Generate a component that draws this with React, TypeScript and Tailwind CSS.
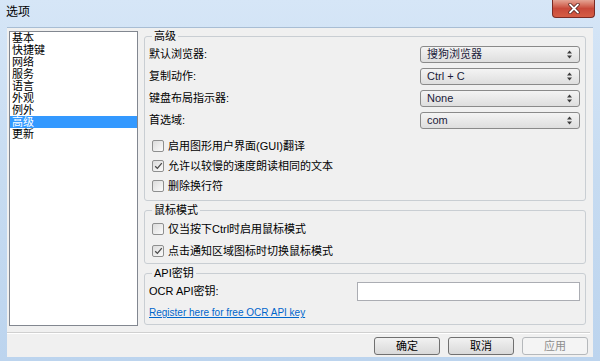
import { useState } from 'react';

const navItems = ['基本', '快捷键', '网络', '服务', '语言', '外观', '例外', '高级', '更新'];

function UpDown() {
  return (
    <svg width="7" height="9" viewBox="0 0 7 9" className="shrink-0">
      <path d="M3.5 0.5 L6 3.5 L1 3.5 Z" fill="#3c3c3c" />
      <path d="M1 5.5 L6 5.5 L3.5 8.5 Z" fill="#3c3c3c" />
    </svg>
  );
}

function Select({ value }: { value: string }) {
  return (
    <div className="w-[160px] h-[17px] pl-[6px] pr-[6px] flex items-center justify-between rounded-[3px] border border-[#8a8a8a] bg-gradient-to-b from-[#f4f4f4] to-[#dedede] text-[#1b1b3a]">
      <span className="leading-[15px]">{value}</span>
      <UpDown />
    </div>
  );
}

function CheckBox({ label, checked }: { label: string; checked?: boolean }) {
  return (
    <div className="flex items-center gap-[4px] pl-[3px]">
      <div className="w-[12px] h-[12px] rounded-[2px] border border-[#8e8f8f] bg-gradient-to-br from-[#dcdcdc] to-[#fbfbfb] flex items-center justify-center">
        {checked && (
          <svg width="9" height="8" viewBox="0 0 9 8">
            <path d="M1.2 4.2 L3.4 6.4 L7.8 1.2" fill="none" stroke="#4a4a4a" strokeWidth="1.3" />
          </svg>
        )}
      </div>
      <span className="leading-[12px]">{label}</span>
    </div>
  );
}

function Button({ label, disabled }: { label: string; disabled?: boolean }) {
  return (
    <div
      className={`w-[66px] h-[18px] flex items-center justify-center rounded-[3px] border ${
        disabled
          ? 'border-[#b5b8bb] bg-[#f4f4f4] text-[#8d8d8d]'
          : 'border-[#707070] bg-gradient-to-b from-[#f2f2f2] to-[#d9d9d9] text-black'
      }`}
    >
      {label}
    </div>
  );
}

export default function App() {
  const [selected] = useState(7);

  return (
    <div className="w-[600px] h-[361px] flex flex-col bg-gradient-to-b from-[#d6e6f7] via-[#c6dbf1] to-[#bcd4ee] font-['Liberation_Sans','Noto_Sans_CJK_SC',sans-serif] text-[11px] text-black overflow-hidden">
      {/* title bar */}
      <div className="h-[27px] flex items-start justify-between shrink-0">
        <span className="ml-[6px] mt-[5px] text-[12px] leading-[14px]">选项</span>
        <div className="mr-[5px] w-[43px] h-[18px] rounded-b-[4px] border border-t-0 border-[#7a2b24] bg-gradient-to-b from-[#e4a394] via-[#c8493a] to-[#d55d45] flex items-center justify-center">
          <svg width="12" height="11" viewBox="0 0 12 11">
            <path d="M2 1.5 L10 9.5 M10 1.5 L2 9.5" stroke="#4b1a15" strokeWidth="3.2" strokeLinecap="round" />
            <path d="M2 1.5 L10 9.5 M10 1.5 L2 9.5" stroke="#ffffff" strokeWidth="1.8" strokeLinecap="round" />
          </svg>
        </div>
      </div>

      {/* client area */}
      <div className="mx-[7px] h-[330px] bg-[#f0f0f0] border-t border-[#a8bdd4] flex flex-col">
        <div className="flex">
          {/* nav list */}
          <div className="ml-[2px] mt-[3px] w-[129px] h-[295px] border border-[#828790] bg-white">
            {navItems.map((item, i) => (
              <div
                key={item}
                className={`h-[12px] leading-[12px] pl-[2px] ${
                  i === selected ? 'bg-[#3399ff] text-white' : 'text-black'
                }`}
              >
                {item}
              </div>
            ))}
          </div>

          {/* settings */}
          <div className="ml-[6px] mt-[2px] w-[442px] flex flex-col gap-[3px]">
            <fieldset className="border border-[#c9ced3] rounded-[3px] px-[4px] pt-[1px] pb-[4px] m-0 min-w-0">
              <legend className="ml-[3px] px-[2px] h-[12px] leading-[12px]">高级</legend>
              {[
                ['默认浏览器:', '搜狗浏览器'],
                ['复制动作:', 'Ctrl + C'],
                ['键盘布局指示器:', 'None'],
                ['首选域:', 'com'],
              ].map(([label, value]) => (
                <div key={label} className="h-[22px] flex items-center justify-between pr-[1px]">
                  <span>{label}</span>
                  <Select value={value} />
                </div>
              ))}
              <div className="mt-[5px] flex flex-col">
                <div className="h-[20px] flex items-center">
                  <CheckBox label="启用图形用户界面(GUI)翻译" />
                </div>
                <div className="h-[20px] flex items-center">
                  <CheckBox label="允许以较慢的速度朗读相同的文本" checked />
                </div>
                <div className="h-[20px] flex items-center">
                  <CheckBox label="删除换行符" />
                </div>
              </div>
            </fieldset>

            <fieldset className="border border-[#c9ced3] rounded-[3px] px-[4px] pt-[2px] pb-[1px] m-0 min-w-0">
              <legend className="ml-[3px] px-[2px] h-[12px] leading-[12px]">鼠标模式</legend>
              <div className="h-[22px] flex items-center">
                <CheckBox label="仅当按下Ctrl时启用鼠标模式" />
              </div>
              <div className="h-[22px] flex items-center">
                <CheckBox label="点击通知区域图标时切换鼠标模式" checked />
              </div>
            </fieldset>

            <fieldset className="border border-[#c9ced3] rounded-[3px] px-[4px] pt-[2px] pb-[1px] m-0 min-w-0">
              <legend className="ml-[3px] px-[2px] h-[12px] leading-[12px]">API密钥</legend>
              <div className="h-[21px] flex items-center justify-between pr-[1px]">
                <span>OCR API密钥:</span>
                <div className="w-[223px] h-[19px] border border-[#abadb3] bg-white" />
              </div>
              <div className="h-[21px] flex items-center">
                <span className="text-[10px] text-[#0066cc] underline">Register here for free OCR API key</span>
              </div>
            </fieldset>
          </div>
        </div>

        {/* separator */}
        <div className="mt-[6px] mr-[3px] h-[2px] border-t border-[#d0d0d0] border-b border-b-white" />

        {/* buttons */}
        <div className="mt-[3px] pr-[5px] flex justify-end gap-[8px]">
          <Button label="确定" />
          <Button label="取消" />
          <Button label="应用" disabled />
        </div>
      </div>
    </div>
  );
}
